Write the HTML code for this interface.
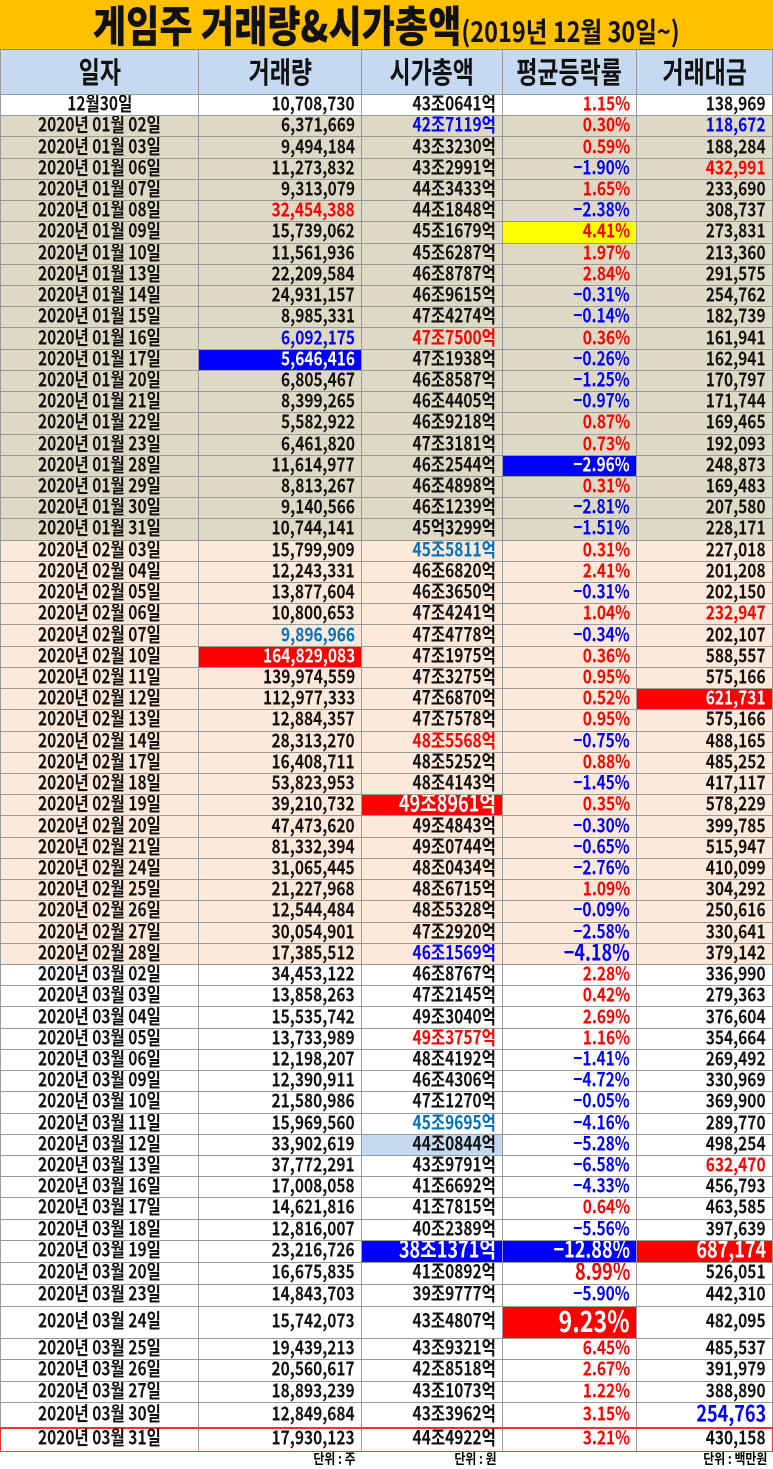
<!DOCTYPE html>
<html><head><meta charset="utf-8">
<style>
*{margin:0;padding:0;box-sizing:border-box}
body{width:773px;height:1469px;background:#fff;font-family:"Liberation Sans","Noto Sans CJK KR",sans-serif;font-weight:700;overflow:hidden}
.t{height:50px;background:#FFC000;text-align:center;border-bottom:1px solid #888;line-height:48px;white-space:nowrap}
.t i{display:inline-block;font-style:normal;transform:scaleX(.84);font-family:"Noto Sans CJK KR",sans-serif;font-weight:900;font-size:43px;color:#111}
.t i small{font-size:28px;font-weight:700}
.r{display:grid;grid-template-columns:199px 163px 141px 134px 136px;height:21.22px;border-bottom:1px solid #9a9a9a;font-family:"Noto Sans CJK KR",sans-serif}
.r>div{border-right:1px solid #9a9a9a;text-align:right;padding-right:6px;white-space:nowrap;overflow:hidden;font-size:18px;line-height:18px;color:#111;display:flex;align-items:center;justify-content:flex-end;font-weight:700}
.r>div:first-child{justify-content:center;padding-right:0;border-left:1px solid #9a9a9a}
.r i{font-style:normal;display:inline-block;transform:translateY(-2px) scale(.86,1.08);transform-origin:right center}
.r>div:first-child i{transform-origin:center}
.h{height:45px;background:#C5D9F1}
.h>div{justify-content:center!important;padding:0!important;font-size:27px!important;line-height:30px!important}
.h i{transform-origin:center!important;transform:translateY(-1px) scale(.85,1.1)!important}
.j{background:#DDD9C4}.f{background:#FDE9D9}.w{background:#fff}
.R{color:#f00!important}.B{color:#00f!important}.L{color:#0070C0!important}
.bR{background:#f00;color:#fff!important}.bB{background:#00f;color:#fff!important}.bY{background:#ff0}.bL{background:#C5D9F1}
.big{font-size:21px!important}.bg2{font-size:27px!important;line-height:28px!important}
.ft{display:grid;grid-template-columns:199px 163px 141px 134px 136px;height:17px;font-family:"Noto Sans CJK KR",sans-serif;font-size:14px;line-height:15px;font-weight:700}
.ft div{text-align:right;padding-right:6px}
.ft i{font-style:normal;display:inline-block;transform:scaleX(.85);transform-origin:right}
</style></head><body>
<div class="t"><i>게임주 거래량&amp;시가총액<small>(2019년 12월 30일~)</small></i></div>
<div class="r h"><div><i>일자</i></div><div><i>거래량</i></div><div><i>시가총액</i></div><div><i>평균등락률</i></div><div><i>거래대금</i></div></div>
<div class="r w"><div><i>12월30일</i></div><div><i>10,708,730</i></div><div><i>43조0641억</i></div><div class="R"><i>1.15%</i></div><div><i>138,969</i></div></div>
<div class="r j"><div><i>2020년 01월 02일</i></div><div><i>6,371,669</i></div><div class="B"><i>42조7119억</i></div><div class="R"><i>0.30%</i></div><div class="B"><i>118,672</i></div></div>
<div class="r j"><div><i>2020년 01월 03일</i></div><div><i>9,494,184</i></div><div><i>43조3230억</i></div><div class="R"><i>0.59%</i></div><div><i>188,284</i></div></div>
<div class="r j"><div><i>2020년 01월 06일</i></div><div><i>11,273,832</i></div><div><i>43조2991억</i></div><div class="B"><i>−1.90%</i></div><div class="R"><i>432,991</i></div></div>
<div class="r j"><div><i>2020년 01월 07일</i></div><div><i>9,313,079</i></div><div><i>44조3433억</i></div><div class="R"><i>1.65%</i></div><div><i>233,690</i></div></div>
<div class="r j"><div><i>2020년 01월 08일</i></div><div class="R"><i>32,454,388</i></div><div><i>44조1848억</i></div><div class="B"><i>−2.38%</i></div><div><i>308,737</i></div></div>
<div class="r j"><div><i>2020년 01월 09일</i></div><div><i>15,739,062</i></div><div><i>45조1679억</i></div><div class="R bY"><i>4.41%</i></div><div><i>273,831</i></div></div>
<div class="r j"><div><i>2020년 01월 10일</i></div><div><i>11,561,936</i></div><div><i>45조6287억</i></div><div class="R"><i>1.97%</i></div><div><i>213,360</i></div></div>
<div class="r j"><div><i>2020년 01월 13일</i></div><div><i>22,209,584</i></div><div><i>46조8787억</i></div><div class="R"><i>2.84%</i></div><div><i>291,575</i></div></div>
<div class="r j"><div><i>2020년 01월 14일</i></div><div><i>24,931,157</i></div><div><i>46조9615억</i></div><div class="B"><i>−0.31%</i></div><div><i>254,762</i></div></div>
<div class="r j"><div><i>2020년 01월 15일</i></div><div><i>8,985,331</i></div><div><i>47조4274억</i></div><div class="B"><i>−0.14%</i></div><div><i>182,739</i></div></div>
<div class="r j"><div><i>2020년 01월 16일</i></div><div class="B"><i>6,092,175</i></div><div class="R"><i>47조7500억</i></div><div class="R"><i>0.36%</i></div><div><i>161,941</i></div></div>
<div class="r j"><div><i>2020년 01월 17일</i></div><div class="bB"><i>5,646,416</i></div><div><i>47조1938억</i></div><div class="B"><i>−0.26%</i></div><div><i>162,941</i></div></div>
<div class="r j"><div><i>2020년 01월 20일</i></div><div><i>6,805,467</i></div><div><i>46조8587억</i></div><div class="B"><i>−1.25%</i></div><div><i>170,797</i></div></div>
<div class="r j"><div><i>2020년 01월 21일</i></div><div><i>8,399,265</i></div><div><i>46조4405억</i></div><div class="B"><i>−0.97%</i></div><div><i>171,744</i></div></div>
<div class="r j"><div><i>2020년 01월 22일</i></div><div><i>5,582,922</i></div><div><i>46조9218억</i></div><div class="R"><i>0.87%</i></div><div><i>169,465</i></div></div>
<div class="r j"><div><i>2020년 01월 23일</i></div><div><i>6,461,820</i></div><div><i>47조3181억</i></div><div class="R"><i>0.73%</i></div><div><i>192,093</i></div></div>
<div class="r j"><div><i>2020년 01월 28일</i></div><div><i>11,614,977</i></div><div><i>46조2544억</i></div><div class="bB"><i>−2.96%</i></div><div><i>248,873</i></div></div>
<div class="r j"><div><i>2020년 01월 29일</i></div><div><i>8,813,267</i></div><div><i>46조4898억</i></div><div class="R"><i>0.31%</i></div><div><i>169,483</i></div></div>
<div class="r j"><div><i>2020년 01월 30일</i></div><div><i>9,140,566</i></div><div><i>46조1239억</i></div><div class="B"><i>−2.81%</i></div><div><i>207,580</i></div></div>
<div class="r j"><div><i>2020년 01월 31일</i></div><div><i>10,744,141</i></div><div><i>45억3299억</i></div><div class="B"><i>−1.51%</i></div><div><i>228,171</i></div></div>
<div class="r f"><div><i>2020년 02월 03일</i></div><div><i>15,799,909</i></div><div class="L"><i>45조5811억</i></div><div class="R"><i>0.31%</i></div><div><i>227,018</i></div></div>
<div class="r f"><div><i>2020년 02월 04일</i></div><div><i>12,243,331</i></div><div><i>46조6820억</i></div><div class="R"><i>2.41%</i></div><div><i>201,208</i></div></div>
<div class="r f"><div><i>2020년 02월 05일</i></div><div><i>13,877,604</i></div><div><i>46조3650억</i></div><div class="B"><i>−0.31%</i></div><div><i>202,150</i></div></div>
<div class="r f"><div><i>2020년 02월 06일</i></div><div><i>10,800,653</i></div><div><i>47조4241억</i></div><div class="R"><i>1.04%</i></div><div class="R"><i>232,947</i></div></div>
<div class="r f"><div><i>2020년 02월 07일</i></div><div class="L"><i>9,896,966</i></div><div><i>47조4778억</i></div><div class="B"><i>−0.34%</i></div><div><i>202,107</i></div></div>
<div class="r f"><div><i>2020년 02월 10일</i></div><div class="bR"><i>164,829,083</i></div><div><i>47조1975억</i></div><div class="R"><i>0.36%</i></div><div><i>588,557</i></div></div>
<div class="r f"><div><i>2020년 02월 11일</i></div><div><i>139,974,559</i></div><div><i>47조3275억</i></div><div class="R"><i>0.95%</i></div><div><i>575,166</i></div></div>
<div class="r f"><div><i>2020년 02월 12일</i></div><div><i>112,977,333</i></div><div><i>47조6870억</i></div><div class="R"><i>0.52%</i></div><div class="bR"><i>621,731</i></div></div>
<div class="r f"><div><i>2020년 02월 13일</i></div><div><i>12,884,357</i></div><div><i>47조7578억</i></div><div class="R"><i>0.95%</i></div><div><i>575,166</i></div></div>
<div class="r f"><div><i>2020년 02월 14일</i></div><div><i>28,313,270</i></div><div class="R"><i>48조5568억</i></div><div class="B"><i>−0.75%</i></div><div><i>488,165</i></div></div>
<div class="r f"><div><i>2020년 02월 17일</i></div><div><i>16,408,711</i></div><div><i>48조5252억</i></div><div class="R"><i>0.88%</i></div><div><i>485,252</i></div></div>
<div class="r f"><div><i>2020년 02월 18일</i></div><div><i>53,823,953</i></div><div><i>48조4143억</i></div><div class="B"><i>−1.45%</i></div><div><i>417,117</i></div></div>
<div class="r f"><div><i>2020년 02월 19일</i></div><div><i>39,210,732</i></div><div class="bR big"><i>49조8961억</i></div><div class="R"><i>0.35%</i></div><div><i>578,229</i></div></div>
<div class="r f"><div><i>2020년 02월 20일</i></div><div><i>47,473,620</i></div><div><i>49조4843억</i></div><div class="B"><i>−0.30%</i></div><div><i>399,785</i></div></div>
<div class="r f"><div><i>2020년 02월 21일</i></div><div><i>81,332,394</i></div><div><i>49조0744억</i></div><div class="B"><i>−0.65%</i></div><div><i>515,947</i></div></div>
<div class="r f"><div><i>2020년 02월 24일</i></div><div><i>31,065,445</i></div><div><i>48조0434억</i></div><div class="B"><i>−2.76%</i></div><div><i>410,099</i></div></div>
<div class="r f"><div><i>2020년 02월 25일</i></div><div><i>21,227,968</i></div><div><i>48조6715억</i></div><div class="R"><i>1.09%</i></div><div><i>304,292</i></div></div>
<div class="r f"><div><i>2020년 02월 26일</i></div><div><i>12,544,484</i></div><div><i>48조5328억</i></div><div class="B"><i>−0.09%</i></div><div><i>250,616</i></div></div>
<div class="r f"><div><i>2020년 02월 27일</i></div><div><i>30,054,901</i></div><div><i>47조2920억</i></div><div class="B"><i>−2.58%</i></div><div><i>330,641</i></div></div>
<div class="r f"><div><i>2020년 02월 28일</i></div><div><i>17,385,512</i></div><div class="B"><i>46조1569억</i></div><div class="B big"><i>−4.18%</i></div><div><i>379,142</i></div></div>
<div class="r w"><div><i>2020년 03월 02일</i></div><div><i>34,453,122</i></div><div><i>46조8767억</i></div><div class="R"><i>2.28%</i></div><div><i>336,990</i></div></div>
<div class="r w"><div><i>2020년 03월 03일</i></div><div><i>13,858,263</i></div><div><i>47조2145억</i></div><div class="R"><i>0.42%</i></div><div><i>279,363</i></div></div>
<div class="r w"><div><i>2020년 03월 04일</i></div><div><i>15,535,742</i></div><div><i>49조3040억</i></div><div class="R"><i>2.69%</i></div><div><i>376,604</i></div></div>
<div class="r w"><div><i>2020년 03월 05일</i></div><div><i>13,733,989</i></div><div class="R"><i>49조3757억</i></div><div class="R"><i>1.16%</i></div><div><i>354,664</i></div></div>
<div class="r w"><div><i>2020년 03월 06일</i></div><div><i>12,198,207</i></div><div><i>48조4192억</i></div><div class="B"><i>−1.41%</i></div><div><i>269,492</i></div></div>
<div class="r w"><div><i>2020년 03월 09일</i></div><div><i>12,390,911</i></div><div><i>46조4306억</i></div><div class="B"><i>−4.72%</i></div><div><i>330,969</i></div></div>
<div class="r w"><div><i>2020년 03월 10일</i></div><div><i>21,580,986</i></div><div><i>47조1270억</i></div><div class="B"><i>−0.05%</i></div><div><i>369,900</i></div></div>
<div class="r w"><div><i>2020년 03월 11일</i></div><div><i>15,969,560</i></div><div class="L"><i>45조9695억</i></div><div class="B"><i>−4.16%</i></div><div><i>289,770</i></div></div>
<div class="r w"><div><i>2020년 03월 12일</i></div><div><i>33,902,619</i></div><div class="bL"><i>44조0844억</i></div><div class="B"><i>−5.28%</i></div><div><i>498,254</i></div></div>
<div class="r w"><div><i>2020년 03월 13일</i></div><div><i>37,772,291</i></div><div><i>43조9791억</i></div><div class="B"><i>−6.58%</i></div><div class="R"><i>632,470</i></div></div>
<div class="r w"><div><i>2020년 03월 16일</i></div><div><i>17,008,058</i></div><div><i>41조6692억</i></div><div class="B"><i>−4.33%</i></div><div><i>456,793</i></div></div>
<div class="r w"><div><i>2020년 03월 17일</i></div><div><i>14,621,816</i></div><div><i>41조7815억</i></div><div class="R"><i>0.64%</i></div><div><i>463,585</i></div></div>
<div class="r w"><div><i>2020년 03월 18일</i></div><div><i>12,816,007</i></div><div><i>40조2389억</i></div><div class="B"><i>−5.56%</i></div><div><i>397,639</i></div></div>
<div class="r w" style="height:22px"><div><i>2020년 03월 19일</i></div><div><i>23,216,726</i></div><div class="bB big"><i>38조1371억</i></div><div class="bB big"><i>−12.88%</i></div><div class="bR big"><i>687,174</i></div></div>
<div class="r w" style="height:22px"><div><i>2020년 03월 20일</i></div><div><i>16,675,835</i></div><div><i>41조0892억</i></div><div class="R big"><i>8.99%</i></div><div><i>526,051</i></div></div>
<div class="r w" style="height:22px"><div><i>2020년 03월 23일</i></div><div><i>14,843,703</i></div><div><i>39조9777억</i></div><div class="B"><i>−5.90%</i></div><div><i>442,310</i></div></div>
<div class="r w" style="height:32px"><div><i>2020년 03월 24일</i></div><div><i>15,742,073</i></div><div><i>43조4807억</i></div><div class="bR bg2"><i>9.23%</i></div><div><i>482,095</i></div></div>
<div class="r w" style="height:21px"><div><i>2020년 03월 25일</i></div><div><i>19,439,213</i></div><div><i>43조9321억</i></div><div class="R"><i>6.45%</i></div><div><i>485,537</i></div></div>
<div class="r w" style="height:22px"><div><i>2020년 03월 26일</i></div><div><i>20,560,617</i></div><div><i>42조8518억</i></div><div class="R"><i>2.67%</i></div><div><i>391,979</i></div></div>
<div class="r w" style="height:21px"><div><i>2020년 03월 27일</i></div><div><i>18,893,239</i></div><div><i>43조1073억</i></div><div class="R"><i>1.22%</i></div><div><i>388,890</i></div></div>
<div class="r w" style="height:25px;border-bottom:1px solid #e33"><div><i>2020년 03월 30일</i></div><div><i>12,849,684</i></div><div><i>43조3962억</i></div><div class="R"><i>3.15%</i></div><div class="B big"><i>254,763</i></div></div>
<div class="r w" style="height:24px;border-bottom:1px solid #e33;outline:1px solid #e33;outline-offset:-1px"><div><i>2020년 03월 31일</i></div><div><i>17,930,123</i></div><div><i>44조4922억</i></div><div class="R"><i>3.21%</i></div><div><i>430,158</i></div></div>
<div class="ft"><div></div><div><i>단위 : 주</i></div><div><i>단위 : 원</i></div><div></div><div><i>단위 : 백만원</i></div></div>
</body></html>
